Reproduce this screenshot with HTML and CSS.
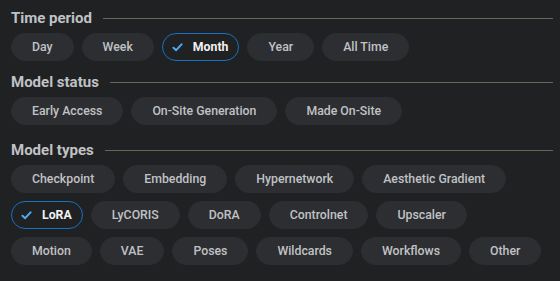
FILE: index.html
```html
<!DOCTYPE html>
<html lang="en">
	<head>
		<meta charset="utf-8">
		<title>Filters</title>
		<link rel="stylesheet" href="styles.css">
	</head>

	<body>
		<div class="filters">
			<div class="section">
				<div class="heading">
					<div class="label">Time period</div>
					<div class="rule"></div>
				</div>
				<div class="chips">
					<button class="chip">Day</button>
					<button class="chip">Week</button>
					<button class="chip checked"><svg class="check" viewBox="0 0 12 10" width="11" height="9"><path d="M1.5 5.2 L4.5 8 L10.5 1.5"/></svg>Month</button>
					<button class="chip">Year</button>
					<button class="chip">All Time</button>
				</div>
			</div>

			<div class="section">
				<div class="heading">
					<div class="label">Model status</div>
					<div class="rule"></div>
				</div>
				<div class="chips">
					<button class="chip">Early Access</button>
					<button class="chip">On-Site Generation</button>
					<button class="chip">Made On-Site</button>
				</div>
			</div>

			<div class="section last">
				<div class="heading">
					<div class="label">Model types</div>
					<div class="rule"></div>
				</div>
				<div class="chips">
					<button class="chip">Checkpoint</button>
					<button class="chip">Embedding</button>
					<button class="chip">Hypernetwork</button>
					<button class="chip">Aesthetic Gradient</button>
					<button class="chip checked"><svg class="check" viewBox="0 0 12 10" width="11" height="9"><path d="M1.5 5.2 L4.5 8 L10.5 1.5"/></svg>LoRA</button>
					<button class="chip">LyCORIS</button>
					<button class="chip">DoRA</button>
					<button class="chip">Controlnet</button>
					<button class="chip">Upscaler</button>
					<button class="chip">Motion</button>
					<button class="chip">VAE</button>
					<button class="chip">Poses</button>
					<button class="chip">Wildcards</button>
					<button class="chip">Workflows</button>
					<button class="chip">Other</button>
				</div>
			</div>
		</div>
	</body>
</html>
```

FILE: styles.css
```css
html {
	background: #1f2123;
}

body {
	margin: 0;
	padding: 8px 7px 0 11px;
	background: #1f2123;
	font-family: 'Roboto', 'Liberation Sans', sans-serif;
	color: #c1c2c5;
}

.section {
	margin-bottom: 11px;
}

.section.last {
	margin-bottom: 0;
	margin-top: 15px;
}

.heading {
	display: flex;
	flex-direction: row;
	align-items: center;
	height: 20px;
	margin-bottom: 5px;
}

.label {
	font-size: 15px;
	font-weight: 700;
	line-height: 20px;
	color: #c1c2c5;
	margin-right: 11px;
}

.rule {
	flex: 1;
	height: 0;
	border-top: 1px solid #6b6459;
}

.chips {
	display: flex;
	flex-direction: row;
	flex-wrap: wrap;
	gap: 8px;
	padding-right: 8px;
}

.chip {
	display: flex;
	flex-direction: row;
	align-items: center;
	height: 28px;
	padding: 0 20px;
	border: 1px solid #2c2e31;
	border-radius: 14px;
	background: #2c2e31;
	color: #c1c2c5;
	font-family: inherit;
	font-size: 12.3px;
	font-weight: 500;
	line-height: 26px;
	cursor: pointer;
	outline: none;
}

.chip.checked {
	padding: 0 10px 0 9px;
	background: transparent;
	border-color: #1971c2;
	color: #f1f1f2;
	font-weight: 700;
}

.check {
	margin-right: 10px;
	fill: none;
	stroke: #4dabf7;
	stroke-width: 2.2;
	stroke-linecap: round;
	stroke-linejoin: round;
}
```
